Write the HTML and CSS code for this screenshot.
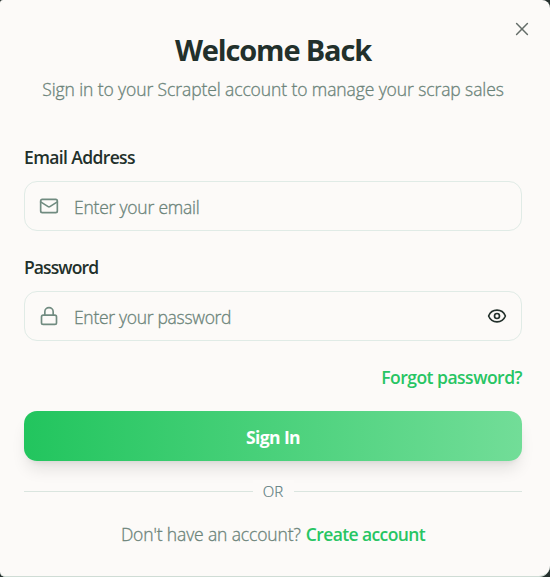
FILE: index.html
```html
<!DOCTYPE html>
<html lang="en">
<head>
<meta charset="utf-8">
<title>Welcome Back</title>
<link rel="stylesheet" href="styles.css">
</head>
<body>
<main class="dialog">
  <button class="close" aria-label="Close">
    <svg width="20" height="20" viewBox="0 0 24 24"><path d="M18.5 5.5l-13 13M5.5 5.5l13 13"/></svg>
  </button>
  <header class="header">
    <h1 class="title">Welcome Back</h1>
    <p class="subtitle">Sign in to your Scraptel account to manage your scrap sales</p>
  </header>
  <form class="form">
    <div class="field">
      <div class="label"><span class="label-email">Email Address</span></div>
      <div class="input">
        <svg class="icon" width="20" height="20" viewBox="0 0 24 24"><rect width="20" height="16" x="2" y="4" rx="2"/><path d="m22 7-8.97 5.7a1.94 1.94 0 0 1-2.06 0L2 7"/></svg>
        <span class="placeholder ph-email">Enter your email</span>
      </div>
    </div>
    <div class="field">
      <div class="label"><span class="label-password">Password</span></div>
      <div class="input">
        <svg class="icon" width="20" height="20" viewBox="0 0 24 24"><rect width="18" height="11" x="3" y="11" rx="2"/><path d="M7 11V7a5 5 0 0 1 10 0v4"/></svg>
        <span class="placeholder ph-password">Enter your password</span>
        <svg class="eye" width="20" height="20" viewBox="0 0 24 24"><path d="M2.06 12.35a1 1 0 0 1 0-.7 10.75 10.75 0 0 1 19.88 0 1 1 0 0 1 0 .7 10.75 10.75 0 0 1-19.88 0"/><circle cx="12" cy="12" r="3"/></svg>
      </div>
    </div>
    <div class="forgot"><span class="forgot-link">Forgot password?</span></div>
    <button class="submit" type="button"><span class="submit-text">Sign In</span></button>
  </form>
  <div class="divider"><span class="or"><span class="or-text">OR</span></span></div>
  <p class="signup"><span class="question">Don't have an account?</span><span class="create">Create account</span></p>
</main>
</body>
</html>
```
FILE: styles.css
```css
* { box-sizing: border-box; margin: 0; }
body {
  background: #25302d;
  font-family: "Open Sans", "Noto Sans", sans-serif;
  font-size: 17.5px;
  color: #22302b;
}
svg { fill: none; stroke: currentColor; stroke-width: 2; stroke-linecap: round; stroke-linejoin: round; flex: none; display: block; }
.dialog {
  position: relative;
  height: 577px;
  padding: 32px 28px 0 24px;
  background: #fcfaf8;
  border-bottom: 1px solid #cfdcd5;
  border-radius: 3px 8px 11px 5px;
}
.close {
  position: absolute;
  top: 19px;
  right: 18px;
  padding: 0;
  border: 0;
  background: none;
  color: #646d69;
}
.close svg { stroke-width: 1.8; }
.header { display: flex; flex-direction: column; align-items: center; width: 498px; }
.title { font-size: 29px; line-height: 36px; font-weight: 700; letter-spacing: -1.15px; white-space: nowrap; }
.subtitle { margin-top: 7px; line-height: 28px; letter-spacing: -0.1px; white-space: nowrap; }
.subtitle, .placeholder, .question {
  font-weight: 300;
  color: #6b8379;
  -webkit-text-stroke: 0.3px #6b8379;
}
.form { margin-top: 41px; }
.field { margin-bottom: 23px; }
.label { line-height: 26px; margin-bottom: 11px; font-weight: 600; }
.label-email { letter-spacing: -0.62px; }
.label-password { letter-spacing: -0.9px; }
.input {
  display: flex;
  align-items: center;
  height: 50px;
  padding: 0 14px;
  border: 1px solid #e0ebe6;
  border-radius: 13px;
}
.icon { color: #708b80; }
.eye { margin-left: auto; color: #22302b; }
.placeholder { margin-left: 15px; padding-top: 2px; }
.ph-email { letter-spacing: -0.22px; }
.ph-password { letter-spacing: -0.3px; }
.forgot { display: flex; justify-content: flex-end; line-height: 26px; font-weight: 600; color: #27c563; }
.forgot-link { letter-spacing: -0.5px; }
.submit {
  display: block;
  width: 100%;
  height: 50px;
  margin-top: 21px;
  padding: 2px 0 0;
  border: 0;
  border-radius: 13px;
  background: linear-gradient(90deg, #22c55e, #72dd98);
  box-shadow: 0 11px 16px -3px rgb(0 0 0 / .1), 0 4px 6px -4px rgb(0 0 0 / .1);
  color: #fff;
  font: 700 17.5px "Open Sans", "Noto Sans", sans-serif;
}
.submit-text { letter-spacing: -0.6px; }
.divider { position: relative; display: flex; align-items: center; justify-content: center; height: 22px; margin-top: 19px; }
.divider::before, .divider::after { content: ""; flex: 1; height: 1px; background: #dae5df; }
.or { width: 41px; height: 22px; background: #fcfaf8; line-height: 23px; text-align: center; font-size: 15px; font-weight: 300; color: #5c7c80; -webkit-text-stroke: 0.2px #5c7c80; }
.signup { display: flex; justify-content: center; gap: 5px; margin-top: 19px; line-height: 26px; white-space: nowrap; }
.question { letter-spacing: -0.13px; }
.create { font-weight: 600; color: #27c563; letter-spacing: -0.6px; }
.dialog > .form, .dialog > .divider, .dialog > .signup { width: 498px; }
```
